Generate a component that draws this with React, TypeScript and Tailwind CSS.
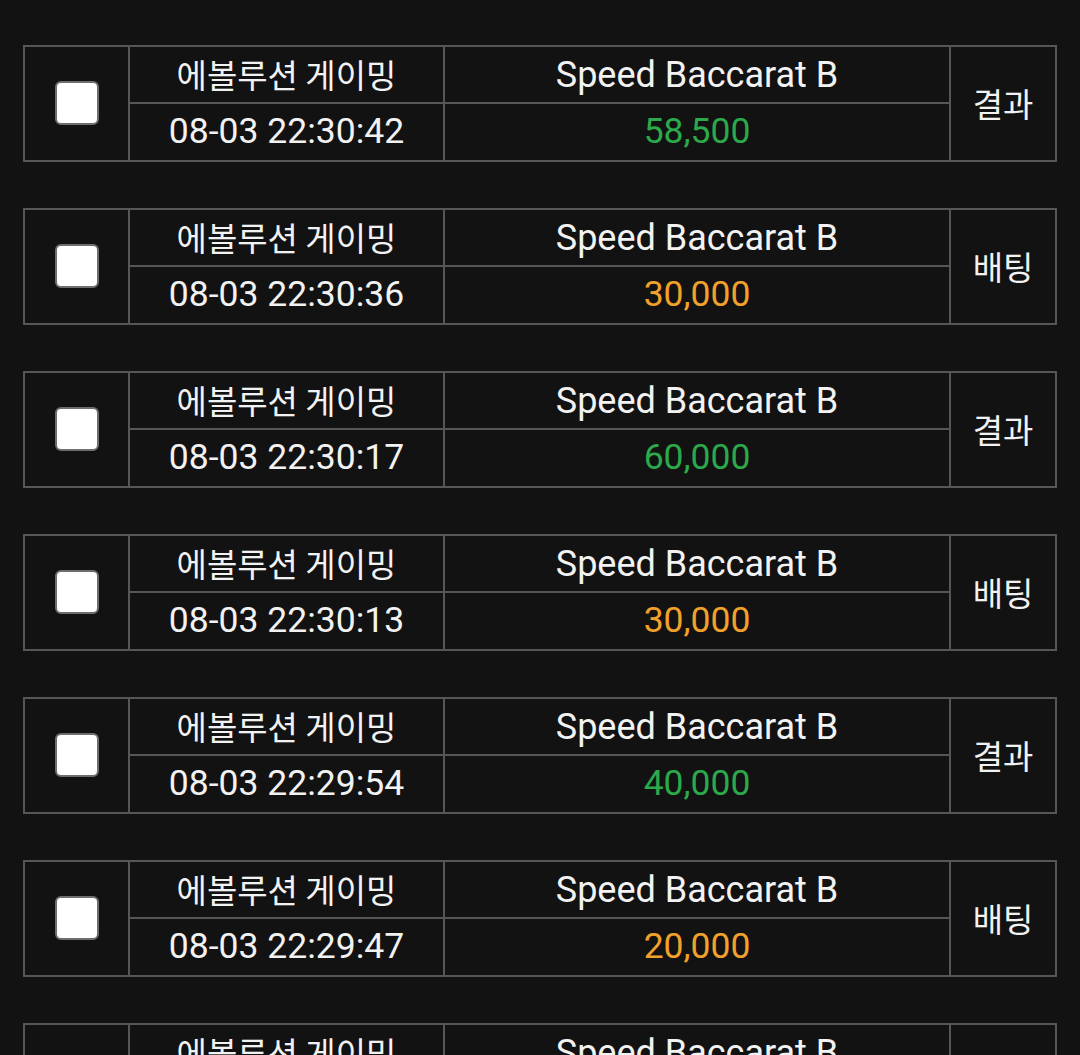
import React from "react";

type Row = { time: string; amount: string; kind: "결과" | "배팅" };

const rows: Row[] = [
  { time: "08-03 22:30:42", amount: "58,500", kind: "결과" },
  { time: "08-03 22:30:36", amount: "30,000", kind: "배팅" },
  { time: "08-03 22:30:17", amount: "60,000", kind: "결과" },
  { time: "08-03 22:30:13", amount: "30,000", kind: "배팅" },
  { time: "08-03 22:29:54", amount: "40,000", kind: "결과" },
  { time: "08-03 22:29:47", amount: "20,000", kind: "배팅" },
  { time: "08-03 22:29:40", amount: "40,000", kind: "결과" },
];

const ko = "[font-family:'Noto_Sans_CJK_KR',sans-serif] text-[33px]";

function Card({ r }: { r: Row }) {
  return (
    <div className="flex h-[117px] w-[1034px] border-2 border-[#565656] bg-[#121212] text-[#f2f2f2]">
      <div className="flex w-[105px] shrink-0 items-center justify-center border-r-2 border-[#565656]">
        <div className="mt-[-2px] h-[44px] w-[44px] rounded-[6px] border-2 border-[#6e6e6e] bg-white" />
      </div>
      <div className="flex w-[821px] shrink-0 flex-col border-r-2 border-[#565656]">
        <div className="flex h-[57px] border-b-2 border-[#565656]">
          <div className={`flex w-[315px] items-center justify-center border-r-2 border-[#565656] leading-none ${ko}`}>
            에볼루션 게이밍
          </div>
          <div className="flex flex-1 items-center justify-center text-[36px] leading-none">
            Speed Baccarat B
          </div>
        </div>
        <div className="flex flex-1">
          <div className="flex w-[315px] items-center justify-center border-r-2 border-[#565656] text-[35.5px] leading-none">
            {r.time}
          </div>
          <div
            className={`flex flex-1 items-center justify-center text-[35.5px] leading-none ${
              r.kind === "결과" ? "text-[#2ba94b]" : "text-[#f2a12a]"
            }`}
          >
            {r.amount}
          </div>
        </div>
      </div>
      <div className={`flex flex-1 items-center justify-center leading-none ${ko}`}>{r.kind}</div>
    </div>
  );
}

export default function App() {
  return (
    <div className="h-[1055px] w-[1080px] overflow-hidden bg-[#121212] [font-family:Roboto,'Noto_Sans_CJK_KR',sans-serif]">
      <div className="flex flex-col gap-[46px] pl-[23px] pt-[45px]">
        {rows.map((r, i) => (
          <Card key={i} r={r} />
        ))}
      </div>
    </div>
  );
}
